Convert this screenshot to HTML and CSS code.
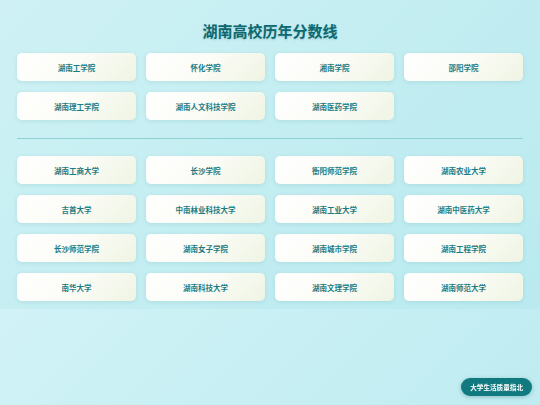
FILE: index.html
```html
<!DOCTYPE html>
<html lang="zh-CN">
<head>
<meta charset="utf-8">
<title>湖南高校历年分数线</title>
<link rel="stylesheet" href="styles.css">
</head>
<body>
<main class="page">
  <h1 class="title">湖南高校历年分数线</h1>

  <section class="grid">
    <a class="card">湖南工学院</a>
    <a class="card">怀化学院</a>
    <a class="card">湘南学院</a>
    <a class="card">邵阳学院</a>
    <a class="card">湖南理工学院</a>
    <a class="card">湖南人文科技学院</a>
    <a class="card">湖南医药学院</a>
  </section>

  <hr class="divider">

  <section class="grid">
    <a class="card">湖南工商大学</a>
    <a class="card">长沙学院</a>
    <a class="card">衡阳师范学院</a>
    <a class="card">湖南农业大学</a>
    <a class="card">吉首大学</a>
    <a class="card">中南林业科技大学</a>
    <a class="card">湖南工业大学</a>
    <a class="card">湖南中医药大学</a>
    <a class="card">长沙师范学院</a>
    <a class="card">湖南女子学院</a>
    <a class="card">湖南城市学院</a>
    <a class="card">湖南工程学院</a>
    <a class="card">南华大学</a>
    <a class="card">湖南科技大学</a>
    <a class="card">湖南文理学院</a>
    <a class="card">湖南师范大学</a>
  </section>
</main>

<a class="guide-btn">大学生活质量指北</a>
</body>
</html>
```

FILE: styles.css
```css
html, body {
  margin: 0;
  padding: 0;
}

body {
  min-height: 100vh;
  background: linear-gradient(135deg, #dcf6f9 0%, #ccf1f5 50%, #bfecf1 100%);
  font-family: "Noto Sans CJK SC", "Noto Sans", sans-serif;
}

.page {
  padding: 20px 17px 8px;
  background: rgba(150, 222, 230, 0.18);
}

.title {
  margin: 0 0 13px;
  height: 20px;
  line-height: 21px;
  text-align: center;
  font-size: 15px;
  font-weight: 700;
  color: #0e6870;
  text-shadow: 0 1px 2px rgba(15, 100, 108, 0.25);
}

.grid {
  display: grid;
  grid-template-columns: repeat(4, 1fr);
  gap: 11px 10px;
}

.card {
  display: flex;
  align-items: center;
  justify-content: center;
  height: 28px;
  border-radius: 5px;
  background: linear-gradient(135deg, #ffffff 0%, #fbfcf6 50%, #eff4e3 100%);
  box-shadow: 0 1px 4px rgba(40, 120, 130, 0.14);
  color: #1c7b83;
  font-size: 7.5px;
  font-weight: 700;
  text-decoration: none;
}

.divider {
  margin: 18px 0 17px;
  border: 0;
  height: 1px;
  background: #8ed0d6;
}

.guide-btn {
  position: fixed;
  right: 8px;
  bottom: 9px;
  height: 18px;
  padding: 0 9px;
  display: flex;
  align-items: center;
  border-radius: 9px;
  background: #117a81;
  box-shadow: 0 1px 4px rgba(10, 80, 90, 0.3);
  color: #ffffff;
  font-size: 6.6px;
  font-weight: 700;
}
```
